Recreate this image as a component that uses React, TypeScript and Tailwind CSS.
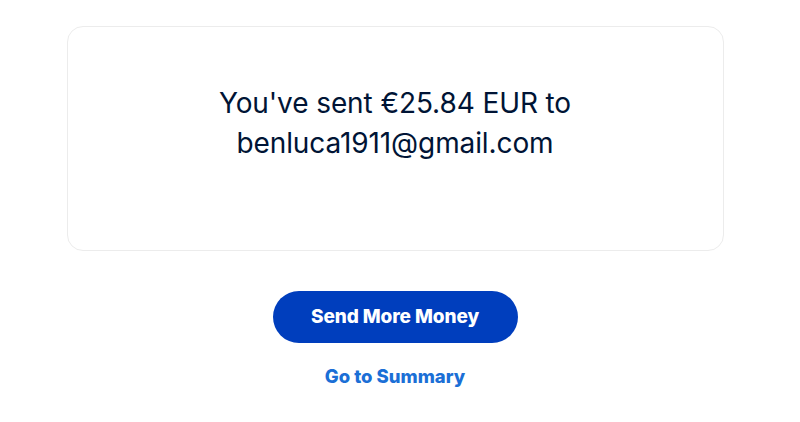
export default function App() {
  return (
    <div className="w-[790px] h-[422px] bg-white flex flex-col items-center" style={{ fontFamily: 'Inter, "Liberation Sans", sans-serif' }}>
      <div className="mt-[26px] w-[657px] h-[225px] border border-[#ececec] rounded-[16px] flex flex-col items-center pt-[56px]">
        <p className="text-[28px] leading-[40px] text-[#001435] text-center tracking-[-0.1px]">
          You've sent €25.84 EUR to
          <br />
          benluca1911@gmail.com
        </p>
      </div>
      <button className="mt-[40px] w-[245px] h-[52px] rounded-full bg-[#003ebd] text-white text-[19px] font-extrabold tracking-[-0.1px]">
        Send More Money
      </button>
      <a className="mt-[20px] text-[18.5px] font-extrabold text-[#1b6fd6] leading-[26px]">Go to Summary</a>
    </div>
  );
}
